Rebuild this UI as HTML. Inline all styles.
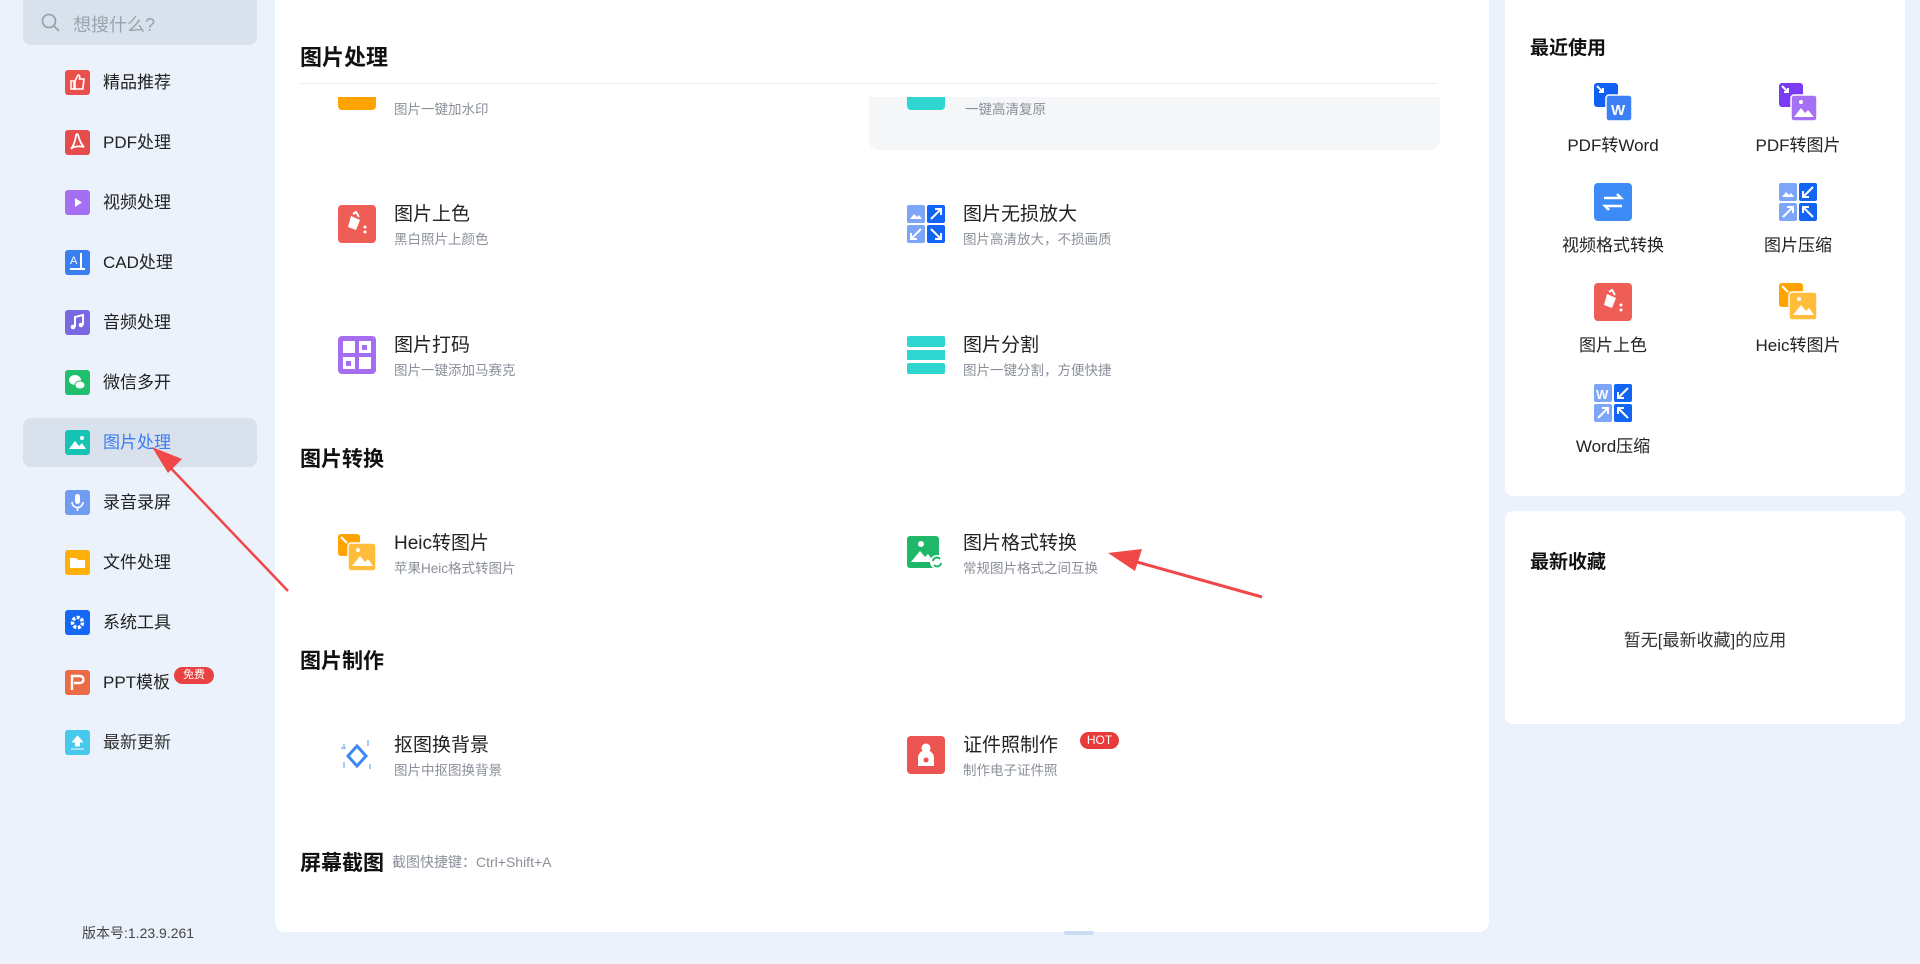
<!DOCTYPE html>
<html><head><meta charset="utf-8">
<style>
*{margin:0;padding:0;box-sizing:border-box}
body{width:1920px;height:964px;overflow:hidden;background:#ebf2fb;font-family:"Liberation Sans","Noto Sans CJK SC",sans-serif;position:relative;color:#222}
.a{position:absolute}
.search{left:23px;top:0;width:234px;height:45px;background:#d8e1ec;border-radius:0 0 8px 8px}
.nav{left:23px;width:234px;height:49px;border-radius:8px}
.nav .ic{position:absolute;left:42px;top:12px;width:25px;height:25px;border-radius:3px}
.nav .t{position:absolute;left:80px;top:14px;font-size:17px;line-height:22px;color:#222}
.sel{background:#d8e1ec}
.sel .t{color:#3b7cf2}
.main{left:275px;top:0;width:1214px;height:932px;background:#fff;border-radius:0 0 10px 10px;overflow:hidden}
.h{font-size:22px;font-weight:bold;color:#111;position:absolute;left:25px}
.it{position:absolute;width:500px;height:44px}
.it .ic{position:absolute;left:0;top:3px;width:38px;height:38px;border-radius:4px}
.it .t{position:absolute;left:56px;top:-3px;font-size:19px;color:#222;white-space:nowrap}
.it .s{position:absolute;left:56px;top:26px;font-size:13.5px;color:#8a8f99;white-space:nowrap}
.panel{background:#fff;border-radius:8px}
.g{position:absolute;width:200px;text-align:center}
.g .ic{margin:0 auto;width:38px;height:38px;border-radius:4px;position:relative}
.g .t{font-size:17px;color:#222;margin-top:10px;white-space:nowrap}
</style></head><body>

<div class="a search">
<svg class="a" style="left:18px;top:13px" width="20" height="20" viewBox="0 0 20 20"><circle cx="8" cy="8" r="6.5" fill="none" stroke="#9aa3ad" stroke-width="1.8"/><path d="M13 13l5 5" stroke="#9aa3ad" stroke-width="1.8"/></svg>
<div class="a" style="left:50px;top:11px;font-size:18px;color:#9aa3ad">想搜什么?</div>
</div>

<div class="a nav" style="top:58px"><div class="ic" style="background:#e9504c"><svg width="25" height="25" viewBox="0 0 25 25"><path d="M6 11h3v8H6zM10 11l3-6c2 0 2 2 1.5 4H19l-1.2 10H10z" fill="none" stroke="#fff" stroke-width="1.6"/></svg></div><div class="t">精品推荐</div></div>
<div class="a nav" style="top:118px"><div class="ic" style="background:#e54d4d"><svg width="25" height="25" viewBox="0 0 25 25"><path d="M12 4c-2 0 0 7-6 15M12 4c2 0 1 7 7 13M6 19c3-3 8-3 13-2" fill="none" stroke="#fff" stroke-width="1.8"/></svg></div><div class="t">PDF处理</div></div>
<div class="a nav" style="top:178px"><div class="ic" style="background:#a46ff0"><svg width="25" height="25"><path d="M10 8l7 4.5-7 4.5z" fill="#fff"/></svg></div><div class="t">视频处理</div></div>
<div class="a nav" style="top:238px"><div class="ic" style="background:#3a7ef2"><svg width="25" height="25"><text x="5" y="14" font-size="11" fill="#fff" font-family="Liberation Sans">A</text><path d="M16 3v16M5 19h15" stroke="#fff" stroke-width="2"/></svg></div><div class="t">CAD处理</div></div>
<div class="a nav" style="top:298px"><div class="ic" style="background:#7a68e2"><svg width="25" height="25"><path d="M10 17V7l8-2v10" fill="none" stroke="#fff" stroke-width="2"/><circle cx="8" cy="17" r="2.3" fill="#fff"/><circle cx="16" cy="15" r="2.3" fill="#fff"/></svg></div><div class="t">音频处理</div></div>
<div class="a nav" style="top:358px"><div class="ic" style="background:#1fbf6e"><svg width="25" height="25"><ellipse cx="10" cy="10" rx="6" ry="5" fill="#fff"/><ellipse cx="15" cy="15" rx="5" ry="4" fill="#fff" stroke="#1fbf6e"/></svg></div><div class="t">微信多开</div></div>
<div class="a nav sel" style="top:418px"><div class="ic" style="background:#16c4b4"><svg width="25" height="25"><path d="M4 19l6-8 4 5 3-3 4 6z" fill="#fff"/><circle cx="17" cy="8" r="2" fill="#fff"/></svg></div><div class="t">图片处理</div></div>
<div class="a nav" style="top:478px"><div class="ic" style="background:#729cf2"><svg width="25" height="25"><rect x="10" y="4" width="5" height="10" rx="2.5" fill="#fff"/><path d="M7 12a5.5 5.5 0 0011 0M12.5 17.5V21" fill="none" stroke="#fff" stroke-width="1.6"/></svg></div><div class="t">录音录屏</div></div>
<div class="a nav" style="top:538px"><div class="ic" style="background:#ffb00a"><svg width="25" height="25"><path d="M5 8h6l2 2h7v8H5z" fill="#fff"/></svg></div><div class="t">文件处理</div></div>
<div class="a nav" style="top:598px"><div class="ic" style="background:#1468f5"><svg width="25" height="25"><circle cx="12.5" cy="12.5" r="5" fill="none" stroke="#fff" stroke-width="3.5" stroke-dasharray="3 1.5"/><circle cx="12.5" cy="12.5" r="2" fill="#1468f5"/></svg></div><div class="t">系统工具</div></div>
<div class="a nav" style="top:658px"><div class="ic" style="background:#ec6a46"><svg width="25" height="25"><path d="M7 20V6h8a3.5 3.5 0 010 7H9" fill="none" stroke="#fff" stroke-width="2.4"/></svg></div><div class="t">PPT模板</div>
<div class="a" style="left:151px;top:9px;width:40px;height:17px;border-radius:9px;background:#e94242;color:#fff;font-size:11px;text-align:center;line-height:17px">免费</div></div>
<div class="a nav" style="top:718px"><div class="ic" style="background:#46c9ea"><svg width="25" height="25"><path d="M12.5 6l5 6h-3v4h-4v-4h-3z M6 19h13" fill="#fff" stroke="#fff" stroke-width="1"/></svg></div><div class="t" style="color:#333">最新更新</div></div>

<div class="a" style="left:82px;top:923px;font-size:14px;color:#444">版本号:1.23.9.261</div>

<div class="a main">
<div class="h" style="top:40px">图片处理</div>
<div class="a" style="left:25px;top:83px;width:1138px;height:1px;background:#eceef1"></div>
<div class="a" style="left:0;top:97px;width:1214px;height:840px;overflow:hidden">
 <div class="a" style="left:594px;top:-20px;width:571px;height:73px;background:#f5f6f8;border-radius:0 0 10px 10px"></div>
 <div class="a" style="left:63px;top:-20px;width:38px;height:33px;background:#ffa300;border-radius:0 0 4px 4px"></div>
 <div class="a" style="left:119px;top:1px;font-size:13.5px;color:#8a8f99">图片一键加水印</div>
 <div class="a" style="left:632px;top:-20px;width:38px;height:33px;background:#2fd6d0;border-radius:0 0 4px 4px"></div>
 <div class="a" style="left:690px;top:1px;font-size:13.5px;color:#8a8f99">一键高清复原</div>
</div>

<div class="it" style="left:63px;top:202px"><div class="ic" style="background:#ee5e57"><svg width="38" height="38"><path d="M13 11l9 4-4 10-8-3z" fill="#fff"/><path d="M15 9l3-2 3 5" fill="none" stroke="#fff" stroke-width="2"/><circle cx="27" cy="22" r="1.5" fill="#fff"/><circle cx="27" cy="27" r="1.5" fill="#fff"/></svg></div><div class="t">图片上色</div><div class="s">黑白照片上颜色</div></div>
<div class="it" style="left:632px;top:202px"><div class="ic"><svg width="38" height="38"><rect width="18" height="18" rx="2" fill="#7ea6f8"/><rect x="20" width="18" height="18" rx="2" fill="#1264f5"/><rect y="20" width="18" height="18" rx="2" fill="#7ea6f8"/><rect x="20" y="20" width="18" height="18" rx="2" fill="#1264f5"/><path d="M3 14l4-5 3 3 2-2 3 4z" fill="#fff"/><path d="M24 14l10-10M28 4h6v6M14 24L4 34M4 28v6h6M24 24l10 10M28 34h6v-6" stroke="#fff" stroke-width="2" fill="none"/></svg></div><div class="t">图片无损放大</div><div class="s">图片高清放大，不损画质</div></div>
<div class="it" style="left:63px;top:333px"><div class="ic" style="background:#a56ef0"><svg width="38" height="38"><rect x="5" y="5" width="12" height="12" fill="#fff"/><rect x="21" y="5" width="12" height="12" fill="#fff"/><rect x="5" y="21" width="12" height="12" fill="#fff"/><rect x="21" y="21" width="12" height="12" fill="#fff"/><rect x="24" y="9" width="5" height="5" fill="#a56ef0"/><rect x="8" y="25" width="5" height="5" fill="#a56ef0"/></svg></div><div class="t">图片打码</div><div class="s">图片一键添加马赛克</div></div>
<div class="it" style="left:632px;top:333px"><div class="ic"><svg width="38" height="38"><rect width="38" height="11" rx="2" fill="#2fd6d0"/><rect y="14" width="38" height="10" fill="#2fd6d0"/><rect y="27" width="38" height="11" rx="2" fill="#2fd6d0"/></svg></div><div class="t">图片分割</div><div class="s">图片一键分割，方便快捷</div></div>

<div class="h" style="top:443px;font-size:21px">图片转换</div>
<div class="it" style="left:63px;top:531px"><div class="ic"><svg width="38" height="38"><rect x="0" y="0" width="22" height="22" rx="3" fill="#ffa300"/><rect x="10" y="9" width="28" height="28" rx="3" fill="#ffbd3b" stroke="#fff" stroke-width="1.5"/><path d="M14 32l8-10 5 6 3-3 5 7z" fill="#fff"/><circle cx="20" cy="16" r="2" fill="#fff"/><path d="M3 3l6 6" stroke="#fff" stroke-width="2"/></svg></div><div class="t">Heic转图片</div><div class="s">苹果Heic格式转图片</div></div>
<div class="it" style="left:632px;top:531px"><div class="ic"><svg width="38" height="38"><rect x="0" y="2" width="32" height="32" rx="3" fill="#1fb86a"/><path d="M4 28l9-11 5 6 3-3 6 8z" fill="#fff"/><circle cx="14" cy="10" r="3" fill="#fff"/><circle cx="30" cy="28" r="7" fill="#fff"/><path d="M26 27a4 4 0 017-2M34 29a4 4 0 01-7 2" stroke="#1fb86a" stroke-width="2" fill="none"/></svg></div><div class="t">图片格式转换</div><div class="s">常规图片格式之间互换</div></div>

<div class="h" style="top:645px;font-size:21px">图片制作</div>
<div class="it" style="left:63px;top:733px"><div class="ic"><svg width="38" height="38"><path d="M19 10l9 10-9 10-9-10z" fill="none" stroke="#3e8af4" stroke-width="3"/><path d="M6 8v5M3 12h5M30 4v6M6 26v6M32 28v5" stroke="#8bb8f8" stroke-width="1.5"/></svg></div><div class="t">抠图换背景</div><div class="s">图片中抠图换背景</div></div>
<div class="it" style="left:632px;top:733px"><div class="ic" style="background:#ec5451"><svg width="38" height="38"><circle cx="19" cy="12" r="4.5" fill="#fff"/><path d="M11 30v-8a8 8 0 0116 0v8z" fill="#fff"/><circle cx="19" cy="24" r="2.5" fill="#ec5451"/></svg></div><div class="t">证件照制作</div><div class="s">制作电子证件照</div>
<div class="a" style="left:173px;top:-1px;width:39px;height:17px;border-radius:9px;background:#e93a3a;color:#fff;font-size:12px;text-align:center;line-height:17px">HOT</div></div>

<div class="h" style="top:847px;font-size:21px">屏幕截图</div>
<div class="a" style="left:117px;top:852px;font-size:14px;color:#8a8f99">截图快捷键：Ctrl+Shift+A</div>
</div>
<div class="a" style="left:1064px;top:931px;width:30px;height:4px;background:#c9dcf3;border-radius:2px"></div>

<div class="a panel" style="left:1505px;top:0;width:400px;height:496px;border-radius:0 0 8px 8px">
<div class="a" style="left:25px;top:33px;font-size:19px;font-weight:bold;color:#111">最近使用</div>
<div class="g" style="left:8px;top:83px"><div class="ic"><svg width="38" height="38"><rect width="24" height="24" rx="3" fill="#1060f2"/><rect x="12" y="12" width="26" height="26" rx="3" fill="#3d80f6" stroke="#fff" stroke-width="1.5"/><path d="M3 3l6 6M9 5v4H5" stroke="#fff" stroke-width="2" fill="none"/><text x="17" y="32" font-size="15" font-weight="bold" fill="#fff" font-family="Liberation Sans">W</text></svg></div><div class="t">PDF转Word</div></div>
<div class="g" style="left:193px;top:83px"><div class="ic"><svg width="38" height="38"><rect width="24" height="24" rx="3" fill="#7a3cf2"/><rect x="12" y="12" width="26" height="26" rx="3" fill="#a570f4" stroke="#fff" stroke-width="1.5"/><path d="M3 3l6 6M9 5v4H5" stroke="#fff" stroke-width="2" fill="none"/><path d="M15 34l7-9 4 5 3-3 6 7z" fill="#fff"/><circle cx="22" cy="19" r="2" fill="#fff"/></svg></div><div class="t">PDF转图片</div></div>
<div class="g" style="left:8px;top:183px"><div class="ic" style="background:#3d8bf7"><svg width="38" height="38"><path d="M10 15h17l-4-4M28 23H11l4 4" stroke="#fff" stroke-width="2.5" fill="none"/></svg></div><div class="t">视频格式转换</div></div>
<div class="g" style="left:193px;top:183px"><div class="ic"><svg width="38" height="38"><rect width="18" height="18" rx="2" fill="#7ea6f8"/><rect x="20" width="18" height="18" rx="2" fill="#1264f5"/><rect y="20" width="18" height="18" rx="2" fill="#7ea6f8"/><rect x="20" y="20" width="18" height="18" rx="2" fill="#1264f5"/><path d="M3 14l4-5 3 3 2-2 3 4z" fill="#fff"/><path d="M34 4L24 14M24 8v6h6M4 34l10-10M8 24h6v6M24 24l10 10M24 30v-6h6" stroke="#fff" stroke-width="2" fill="none"/></svg></div><div class="t">图片压缩</div></div>
<div class="g" style="left:8px;top:283px"><div class="ic" style="background:#ee5e57"><svg width="38" height="38"><path d="M13 11l9 4-4 10-8-3z" fill="#fff"/><path d="M15 9l3-2 3 5" fill="none" stroke="#fff" stroke-width="2"/><circle cx="27" cy="22" r="1.5" fill="#fff"/><circle cx="27" cy="27" r="1.5" fill="#fff"/></svg></div><div class="t">图片上色</div></div>
<div class="g" style="left:193px;top:283px"><div class="ic"><svg width="38" height="38"><rect width="24" height="24" rx="3" fill="#ffa300"/><rect x="10" y="9" width="28" height="28" rx="3" fill="#ffbd3b" stroke="#fff" stroke-width="1.5"/><path d="M14 32l8-10 5 6 3-3 5 7z" fill="#fff"/><circle cx="20" cy="16" r="2" fill="#fff"/><path d="M3 3l6 6" stroke="#fff" stroke-width="2"/></svg></div><div class="t">Heic转图片</div></div>
<div class="g" style="left:8px;top:384px"><div class="ic"><svg width="38" height="38"><rect width="18" height="18" rx="2" fill="#7ea6f8"/><rect x="20" width="18" height="18" rx="2" fill="#1264f5"/><rect y="20" width="18" height="18" rx="2" fill="#7ea6f8"/><rect x="20" y="20" width="18" height="18" rx="2" fill="#1264f5"/><text x="2" y="15" font-size="13" font-weight="bold" fill="#fff" font-family="Liberation Sans">W</text><path d="M34 4L24 14M24 8v6h6M4 34l10-10M8 24h6v6M24 24l10 10M24 30v-6h6" stroke="#fff" stroke-width="2" fill="none"/></svg></div><div class="t">Word压缩</div></div>
</div>

<div class="a panel" style="left:1505px;top:511px;width:400px;height:213px">
<div class="a" style="left:25px;top:36px;font-size:19px;font-weight:bold;color:#111">最新收藏</div>
<div class="a" style="left:0;top:115px;width:400px;text-align:center;font-size:17px;color:#333">暂无[最新收藏]的应用</div>
</div>

<svg class="a" style="left:0;top:0" width="1920" height="964">
<path d="M288 591L165 462" stroke="#f04848" stroke-width="2.5"/>
<path d="M152 447l30 12-14 14z" fill="#f04848"/>
<path d="M1262 597L1130 560" stroke="#f04848" stroke-width="3"/>
<path d="M1108 553l34-4-7 22z" fill="#f04848"/>
</svg>
</body></html>
